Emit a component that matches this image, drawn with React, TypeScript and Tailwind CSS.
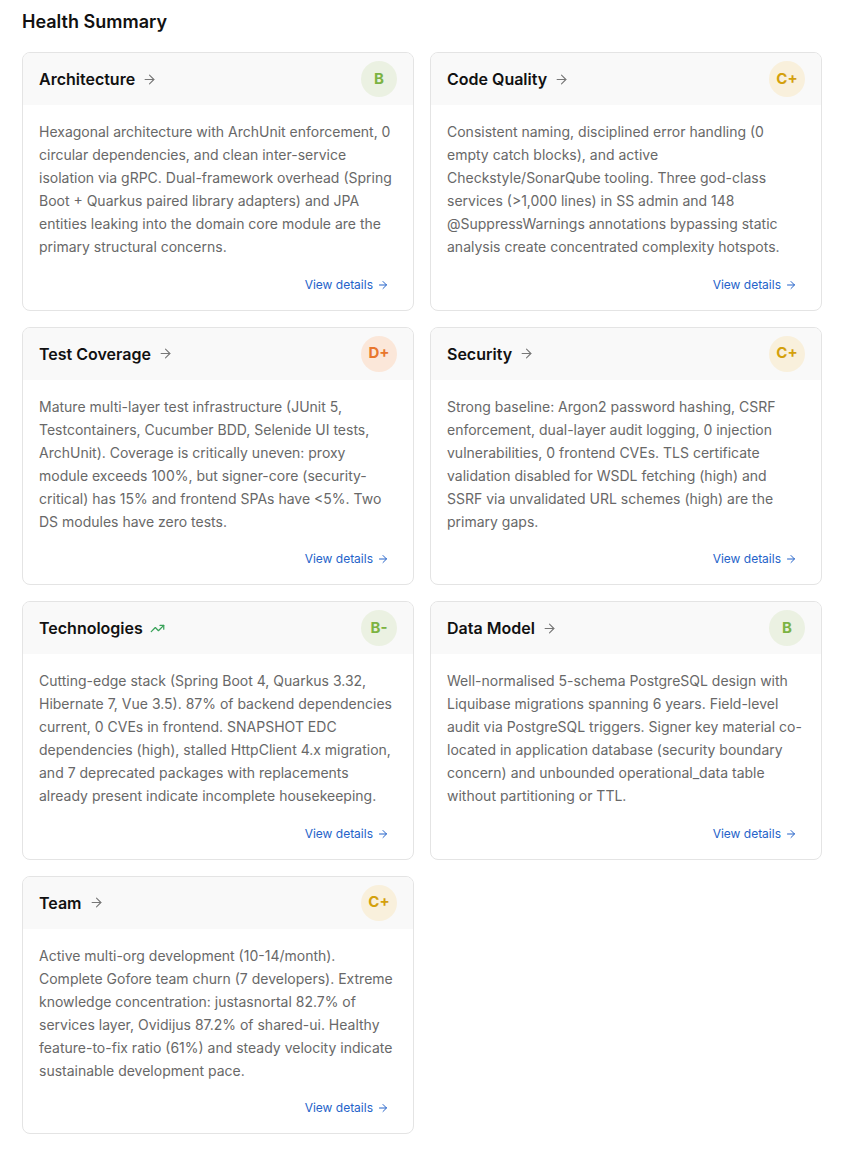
import React from 'react';
import { ArrowRight, TrendingUp } from 'lucide-react';

type Grade = 'B' | 'B-' | 'C+' | 'D+';

interface Summary {
  title: string;
  grade: Grade;
  trend?: boolean;
  text: string;
}

const gradeStyles: Record<Grade, string> = {
  B: 'bg-[#ebf1e2] text-[#7cb342]',
  'B-': 'bg-[#ebf1e2] text-[#7cb342]',
  'C+': 'bg-[#f9f0dc] text-[#d4a00c]',
  'D+': 'bg-[#fbe7d9] text-[#e8762c]',
};

const summaries: Summary[] = [
  {
    title: 'Architecture',
    grade: 'B',
    text: 'Hexagonal architecture with ArchUnit enforcement, 0 circular dependencies, and clean inter-service isolation via gRPC. Dual-framework overhead (Spring Boot + Quarkus paired library adapters) and JPA entities leaking into the domain core module are the primary structural concerns.',
  },
  {
    title: 'Code Quality',
    grade: 'C+',
    text: 'Consistent naming, disciplined error handling (0 empty catch blocks), and active Checkstyle/SonarQube tooling. Three god-class services (>1,000 lines) in SS admin and 148 @SuppressWarnings annotations bypassing static analysis create concentrated complexity hotspots.',
  },
  {
    title: 'Test Coverage',
    grade: 'D+',
    text: 'Mature multi-layer test infrastructure (JUnit 5, Testcontainers, Cucumber BDD, Selenide UI tests, ArchUnit). Coverage is critically uneven: proxy module exceeds 100%, but signer-core (security-critical) has 15% and frontend SPAs have <5%. Two DS modules have zero tests.',
  },
  {
    title: 'Security',
    grade: 'C+',
    text: 'Strong baseline: Argon2 password hashing, CSRF enforcement, dual-layer audit logging, 0 injection vulnerabilities, 0 frontend CVEs. TLS certificate validation disabled for WSDL fetching (high) and SSRF via unvalidated URL schemes (high) are the primary gaps.',
  },
  {
    title: 'Technologies',
    grade: 'B-',
    trend: true,
    text: 'Cutting-edge stack (Spring Boot 4, Quarkus 3.32, Hibernate 7, Vue 3.5). 87% of backend dependencies current, 0 CVEs in frontend. SNAPSHOT EDC dependencies (high), stalled HttpClient 4.x migration, and 7 deprecated packages with replacements already present indicate incomplete housekeeping.',
  },
  {
    title: 'Data Model',
    grade: 'B',
    text: 'Well-normalised 5-schema PostgreSQL design with Liquibase migrations spanning 6 years. Field-level audit via PostgreSQL triggers. Signer key material co-located in application database (security boundary concern) and unbounded operational_data table without partitioning or TTL.',
  },
  {
    title: 'Team',
    grade: 'C+',
    text: 'Active multi-org development (10-14/month). Complete Gofore team churn (7 developers). Extreme knowledge concentration: justasnortal 82.7% of services layer, Ovidijus 87.2% of shared-ui. Healthy feature-to-fix ratio (61%) and steady velocity indicate sustainable development pace.',
  },
];

const SummaryCard: React.FC<{ item: Summary }> = ({ item }) => (
  <div className="flex flex-col h-[258.5px] rounded-lg border border-[#e4e4e4] bg-white overflow-hidden">
    <div className="flex items-center justify-between h-[52px] pl-4 pr-4 bg-[#f9f9f9]">
      <div className="flex items-center gap-[7px]">
        <span className="text-[16px] font-semibold text-[#111111]">{item.title}</span>
        {item.trend ? (
          <TrendingUp className="w-[15px] h-[15px] text-[#3aa35a]" strokeWidth={2} />
        ) : (
          <ArrowRight className="w-[15px] h-[15px] text-[#777777]" strokeWidth={1.75} />
        )}
      </div>
      <div
        className={`flex items-center justify-center w-9 h-9 rounded-full text-[15px] font-bold ${gradeStyles[item.grade]}`}
      >
        {item.grade}
      </div>
    </div>
    <div className="flex flex-col flex-1 px-4 pt-[15px] pb-4">
      <p className="text-[14px] leading-[23px] text-[#686868]">{item.text}</p>
      <div className="mt-auto flex justify-end pr-2">
        <a href="#" className="flex items-center gap-1 text-[12px] text-[#2563c9]">
          View details
          <ArrowRight className="w-3 h-3" strokeWidth={2} />
        </a>
      </div>
    </div>
  </div>
);

export default function App() {
  return (
    <div className="min-h-screen bg-white px-[22px] pt-[10px] pb-6" style={{ fontFamily: 'Inter, "Noto Sans", sans-serif' }}>
      <h2 className="text-[18px] font-semibold text-[#111111] leading-[24px] mb-[18px]">Health Summary</h2>
      <div className="grid grid-cols-2 gap-4 w-[800px]">
        {summaries.map((s) => (
          <SummaryCard key={s.title} item={s} />
        ))}
      </div>
    </div>
  );
}
